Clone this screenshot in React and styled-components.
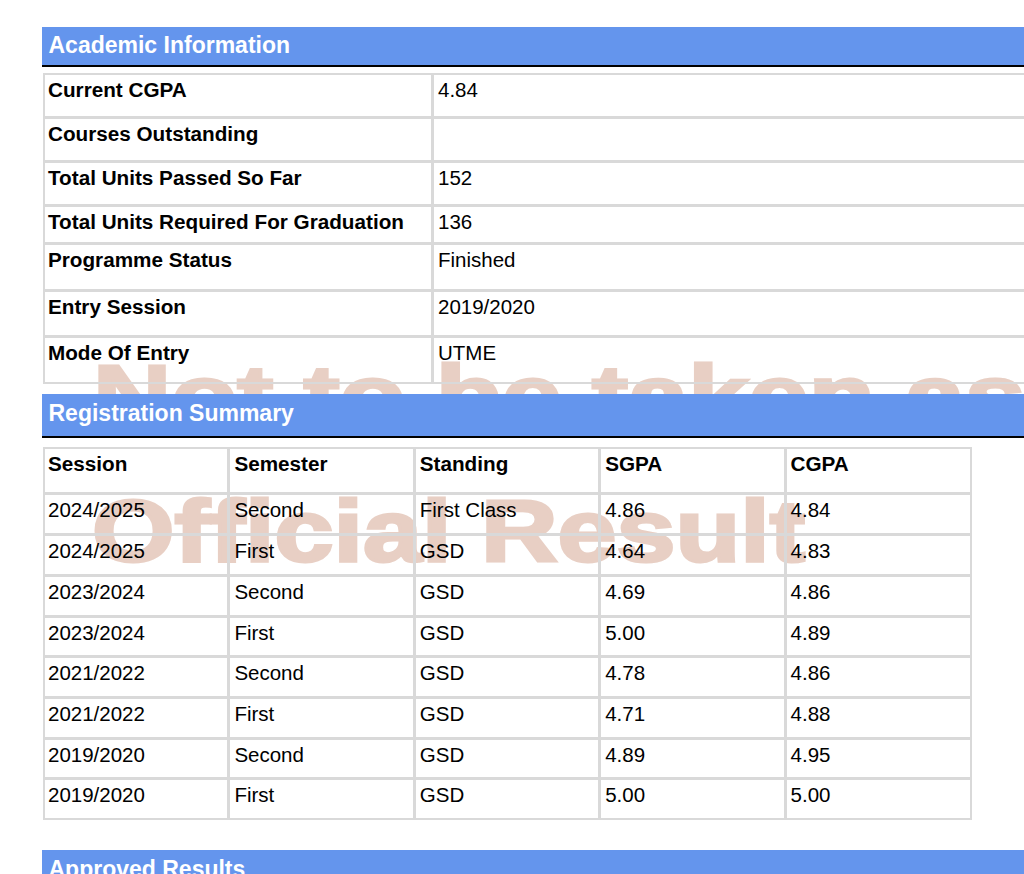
import React from "react";
import styled, { createGlobalStyle } from "styled-components";

const Global = createGlobalStyle`
  html, body {
    margin: 0;
    padding: 0;
    height: 100%;
    overflow: hidden;
    background: #fff;
  }
  body {
    font-family: "Liberation Sans", Arial, sans-serif;
    color: #000;
  }
`;

/* ================= LAYOUT ================= */

const Page = styled.div`
  position: relative;
  width: 1124px;
  height: 874px;
  overflow: hidden;
  padding: 27px 0 0 42px;
  box-sizing: border-box;
`;

/* watermark sits behind the tables, stretched wide like the original */
const Watermark = styled.div`
  position: absolute;
  left: ${({ $left }) => $left}px;
  top: ${({ $top }) => $top}px;
  font-size: 88px;
  line-height: 88px;
  font-weight: 700;
  white-space: nowrap;
  color: #e8cfc4;
  -webkit-text-stroke: 3px #e8cfc4;
  transform: scaleX(${({ $scale }) => $scale});
  transform-origin: left top;
  user-select: none;
`;

const Content = styled.div`
  position: relative;
  z-index: 1;
`;

const SectionBar = styled.h2`
  margin: ${({ $top }) => $top}px 0 0;
  height: ${({ $h }) => $h}px;
  box-sizing: content-box;
  display: flex;
  align-items: center;
  padding: 0 0 ${({ $lift }) => $lift}px 6.5px;
  background: #6495ed;
  border-bottom: 2px solid #000;
  color: #fff;
  font-size: 23px;
  font-weight: 700;
  line-height: 1;
`;

/* ================= TABLES ================= */

const Table = styled.table`
  margin: ${({ $top }) => $top}px 0 0 1px;
  width: ${({ $w }) => $w}px;
  table-layout: fixed;
  border-collapse: separate;
  border-spacing: 0;
  border-top: 2px solid #d9d9d9;
  border-left: 2px solid #d9d9d9;
`;

const Row = styled.tr`
  height: ${({ $h }) => $h}px;
`;

const Cell = styled.td`
  box-sizing: border-box;
  padding: 3px 0 0 4px;
  vertical-align: top;
  border-right: 3px solid #d9d9d9;
  border-bottom: 3px solid #d9d9d9;
  font-size: ${({ $bold }) => ($bold ? 20.7 : 20.5)}px;
  line-height: 24px;
  font-weight: ${({ $bold }) => ($bold ? 700 : 400)};

  &:first-child {
    padding-left: 3px;
  }

  &:last-child {
    border-right-width: 2px;
  }

  tr:last-child > & {
    border-bottom-width: 2px;
  }
`;

/* ================= DATA ================= */

const academic = [
  ["Current CGPA", "4.84", 44],
  ["Courses Outstanding", "", 44],
  ["Total Units Passed So Far", "152", 44],
  ["Total Units Required For Graduation", "136", 38],
  ["Programme Status", "Finished", 47],
  ["Entry Session", "2019/2020", 46],
  ["Mode Of Entry", "UTME", 46],
];

const registrationHead = ["Session", "Semester", "Standing", "SGPA", "CGPA"];

const registration = [
  ["2024/2025", "Second", "First Class", "4.86", "4.84"],
  ["2024/2025", "First", "GSD", "4.64", "4.83"],
  ["2023/2024", "Second", "GSD", "4.69", "4.86"],
  ["2023/2024", "First", "GSD", "5.00", "4.89"],
  ["2021/2022", "Second", "GSD", "4.78", "4.86"],
  ["2021/2022", "First", "GSD", "4.71", "4.88"],
  ["2019/2020", "Second", "GSD", "4.89", "4.95"],
  ["2019/2020", "First", "GSD", "5.00", "5.00"],
];

const rowHeights = [41, 41, 41, 40, 41, 41, 40, 40];

export default function App() {
  return (
    <Page>
      <Global />
      <Watermark $left={93} $top={352} $scale={1.23}>Not to be taken as</Watermark>
      <Watermark $left={92} $top={487} $scale={1.205}>Official Result</Watermark>
      <Content>
        <SectionBar $top={0} $h={36} $lift={2}>Academic Information</SectionBar>
        <Table $top={6} $w={1060}>
          <colgroup>
            <col width="389" />
            <col />
          </colgroup>
          <tbody>
            {academic.map(([label, value, h]) => (
              <Row key={label} $h={h}>
                <Cell $bold>{label}</Cell>
                <Cell>{value}</Cell>
              </Row>
            ))}
          </tbody>
        </Table>
        <SectionBar $top={10} $h={39} $lift={3}>Registration Summary</SectionBar>
        <Table $top={9} $w={929}>
          <tbody>
            <Row $h={46}>
              {registrationHead.map((h) => (
                <Cell key={h} $bold>{h}</Cell>
              ))}
            </Row>
            {registration.map((r, i) => (
              <Row key={i} $h={rowHeights[i]}>
                {r.map((v, j) => (
                  <Cell key={j}>{v}</Cell>
                ))}
              </Row>
            ))}
          </tbody>
        </Table>
        <SectionBar $top={30} $h={39} $lift={3}>Approved Results</SectionBar>
      </Content>
    </Page>
  );
}
